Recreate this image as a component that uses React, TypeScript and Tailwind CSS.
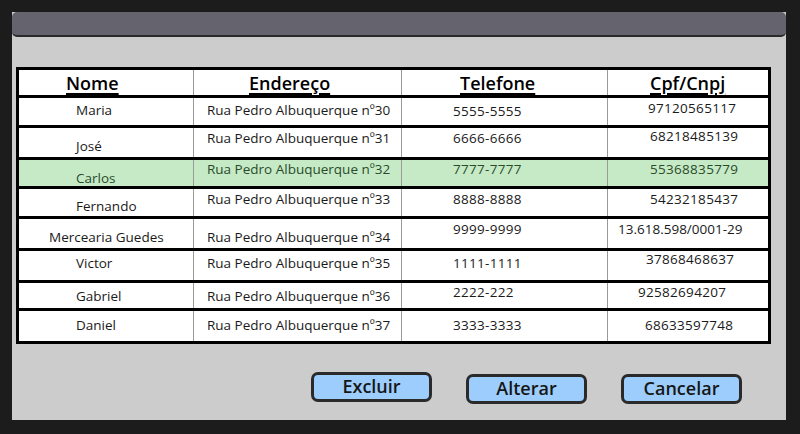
import React from "react";

type Cell = { text: string; cls: string };
type Row = { h: string; green?: boolean; cells: Cell[] };

const rows: Row[] = [
  {
    h: "h-[27px]",
    cells: [
      { text: "Maria", cls: "pt-[4px] pl-[57px]" },
      { text: "Rua Pedro Albuquerque nº30", cls: "pt-[4px] pl-[13px]" },
      { text: "5555-5555", cls: "pt-[5px] pl-[51px] tracking-[0.3px]" },
      { text: "97120565117", cls: "pt-[2px] pl-[40px] tracking-[0.3px]" },
    ],
  },
  {
    h: "h-[29px]",
    cells: [
      { text: "José", cls: "pt-[10px] pl-[57px]" },
      { text: "Rua Pedro Albuquerque nº31", cls: "pt-[2px] pl-[13px]" },
      { text: "6666-6666", cls: "pt-[2px] pl-[51px] tracking-[0.3px]" },
      { text: "68218485139", cls: "pt-[0px] pl-[42px] tracking-[0.3px]" },
    ],
  },
  {
    h: "h-[26px]",
    green: true,
    cells: [
      { text: "Carlos", cls: "pt-[10px] pl-[57px]" },
      { text: "Rua Pedro Albuquerque nº32", cls: "pt-[1px] pl-[13px]" },
      { text: "7777-7777", cls: "pt-[1px] pl-[51px] tracking-[0.3px]" },
      { text: "55368835779", cls: "pt-[1px] pl-[42px] tracking-[0.3px]" },
    ],
  },
  {
    h: "h-[27px]",
    cells: [
      { text: "Fernando", cls: "pt-[9px] pl-[57px]" },
      { text: "Rua Pedro Albuquerque nº33", cls: "pt-[2px] pl-[13px]" },
      { text: "8888-8888", cls: "pt-[2px] pl-[51px] tracking-[0.3px]" },
      { text: "54232185437", cls: "pt-[2px] pl-[42px] tracking-[0.3px]" },
    ],
  },
  {
    h: "h-[29px]",
    cells: [
      { text: "Mercearia Guedes", cls: "pt-[10px] pl-[30px]" },
      { text: "Rua Pedro Albuquerque nº34", cls: "pt-[10px] pl-[13px]" },
      { text: "9999-9999", cls: "pt-[2px] pl-[51px] tracking-[0.3px]" },
      { text: "13.618.598/0001-29", cls: "pt-[2px] pl-[10px]" },
    ],
  },
  {
    h: "h-[29px]",
    cells: [
      { text: "Victor", cls: "pt-[4px] pl-[57px]" },
      { text: "Rua Pedro Albuquerque nº35", cls: "pt-[4px] pl-[13px]" },
      { text: "1111-1111", cls: "pt-[4px] pl-[51px] tracking-[0.3px]" },
      { text: "37868468637", cls: "pt-[0px] pl-[38px] tracking-[0.3px]" },
    ],
  },
  {
    h: "h-[25px]",
    cells: [
      { text: "Gabriel", cls: "pt-[5px] pl-[57px]" },
      { text: "Rua Pedro Albuquerque nº36", cls: "pt-[5px] pl-[13px]" },
      { text: "2222-222", cls: "pt-[1px] pl-[51px] tracking-[0.3px]" },
      { text: "92582694207", cls: "pt-[1px] pl-[30px] tracking-[0.3px]" },
    ],
  },
  {
    h: "h-[30px]",
    cells: [
      { text: "Daniel", cls: "pt-[6px] pl-[57px]" },
      { text: "Rua Pedro Albuquerque nº37", cls: "pt-[6px] pl-[13px]" },
      { text: "3333-3333", cls: "pt-[6px] pl-[51px] tracking-[0.3px]" },
      { text: "68633597748", cls: "pt-[6px] pl-[37px] tracking-[0.3px]" },
    ],
  },
];

const colW = ["w-[174px]", "w-[208px]", "w-[206px]", "w-[161px]"];

const headers: Cell[] = [
  { text: "Nome", cls: "pl-[47px]" },
  { text: "Endereço", cls: "pl-[55px]" },
  { text: "Telefone", cls: "pl-[58px]" },
  { text: "Cpf/Cnpj", cls: "pl-[42px]" },
];

function Btn({ label, cls }: { label: string; cls: string }) {
  return (
    <div
      className={`w-[121px] h-[30px] rounded-[7px] border-[3px] border-[#2a2a2a] bg-[#9dcdfc] flex items-center justify-center text-[18px] font-semibold text-[#161616] leading-none pb-[2px] ${cls}`}
    >
      {label}
    </div>
  );
}

export default function App() {
  return (
    <div
      className="w-[800px] h-[434px] bg-[#1c1c1c] pt-[12px] pl-[12px] overflow-hidden"
      style={{ fontFamily: '"Open Sans", "Noto Sans", sans-serif' }}
    >
      <div className="w-[774px] h-[408px] bg-[#cccccc] flex flex-col">
        <div className="h-[25px] bg-[#65646e] rounded-[5px] border-b-[2px] border-[#2a2a2b]" />
        <div className="ml-[4px] mt-[30px] w-[755px] border-[3px] border-black bg-white flex flex-col">
          <div className="h-[25px] flex">
            {headers.map((c, i) => (
              <div
                key={i}
                className={`${colW[i]} h-full ${i > 0 ? "border-l border-[#9a9a9a]" : ""} flex items-center`}
              >
                <span
                  className={`${c.cls} text-[18px] font-semibold underline underline-offset-[3px] decoration-[2px] leading-none text-black`}
                >
                  {c.text}
                </span>
              </div>
            ))}
          </div>
          {rows.map((r, ri) => (
            <div
              key={ri}
              className={`${r.h} box-content flex border-t-[3px] border-black ${r.green ? "bg-[#c5eac5]" : "bg-white"}`}
            >
              {r.cells.map((c, i) => (
                <div
                  key={i}
                  className={`${colW[i]} h-full ${i > 0 ? "border-l border-[#9a9a9a]" : ""} ${c.cls} text-[13.5px] leading-[16px] whitespace-nowrap ${r.green ? "text-[#2b4a2b]" : "text-[#1a1a1a]"}`}
                >
                  {c.text}
                </div>
              ))}
            </div>
          ))}
        </div>
        <div className="flex items-start ml-[299px]">
          <Btn label="Excluir" cls="mt-[28px]" />
          <Btn label="Alterar" cls="mt-[30px] ml-[34px]" />
          <Btn label="Cancelar" cls="mt-[30px] ml-[34px]" />
        </div>
      </div>
    </div>
  );
}
